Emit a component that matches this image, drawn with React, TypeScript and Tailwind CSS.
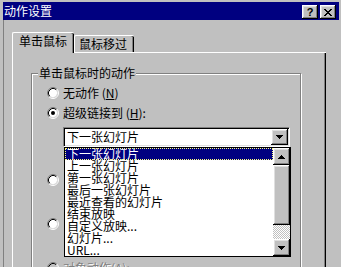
import type { ReactNode } from "react"

const raised =
  "bg-[#c0c0c0] shadow-[inset_-1px_-1px_0_#000,inset_1px_1px_0_#fff,inset_-2px_-2px_0_#808080,inset_2px_2px_0_#dfdfdf]"

const listItems = [
  "下一张幻灯片",
  "上一张幻灯片",
  "第一张幻灯片",
  "最后一张幻灯片",
  "最近查看的幻灯片",
  "结束放映",
  "自定义放映...",
  "幻灯片...",
  "URL...",
]

// rows of the little close "X", as [start, end] pixel spans
const closeRows = [
  [[0, 2], [6, 8]],
  [[1, 3], [5, 7]],
  [[2, 6]],
  [[3, 5]],
  [[2, 6]],
  [[1, 3], [5, 7]],
  [[0, 2], [6, 8]],
]

function CloseGlyph() {
  return (
    <svg width="8" height="7" viewBox="0 0 8 7" shapeRendering="crispEdges">
      {closeRows.map((spans, y) =>
        spans.map(([a, b]) => (
          <rect key={`${y}-${a}`} x={a} y={y} width={b - a} height={1} fill="#000" />
        ))
      )}
    </svg>
  )
}

function ArrowDown() {
  return (
    <svg width="7" height="4" viewBox="0 0 7 4" shapeRendering="crispEdges">
      <path d="M0 0H7V1H6V2H5V3H4V4H3V3H2V2H1V1H0Z" fill="#000" />
    </svg>
  )
}

function ArrowUp() {
  return (
    <svg width="7" height="4" viewBox="0 0 7 4" shapeRendering="crispEdges">
      <path d="M3 0H4V1H5V2H6V3H7V4H0V3H1V2H2V1H3Z" fill="#000" />
    </svg>
  )
}

function TitleButton({ children }: { children: ReactNode }) {
  return (
    <div className={`flex h-[14px] w-[16px] items-center justify-center ${raised}`}>
      {children}
    </div>
  )
}

function Radio({ checked, disabled }: { checked?: boolean; disabled?: boolean }) {
  return (
    <svg width="12" height="12" viewBox="0 0 12 12" className="shrink-0">
      <circle cx="6" cy="6" r="4.2" fill={disabled ? "#c0c0c0" : "#fff"} />
      <path d="M2.11 9.89A5.5 5.5 0 0 1 9.89 2.11" stroke="#808080" fill="none" />
      <path d="M9.89 2.11A5.5 5.5 0 0 1 2.11 9.89" stroke="#fff" fill="none" />
      <path d="M2.82 9.18A4.5 4.5 0 0 1 9.18 2.82" stroke="#000" fill="none" />
      <path d="M9.18 2.82A4.5 4.5 0 0 1 2.82 9.18" stroke="#dfdfdf" fill="none" />
      {checked && <circle cx="6" cy="6" r="2" fill="#000" />}
    </svg>
  )
}

function RadioRow({
  checked,
  disabled,
  className = "",
  children,
}: {
  checked?: boolean
  disabled?: boolean
  className?: string
  children?: ReactNode
}) {
  return (
    <div className={`flex h-[12px] items-center gap-[4px] ${className}`}>
      <Radio checked={checked} disabled={disabled} />
      {children && (
        <span
          className={
            disabled
              ? "whitespace-nowrap text-[#808080] [text-shadow:1px_1px_0_#fff]"
              : "whitespace-nowrap"
          }
        >
          {children}
        </span>
      )}
    </div>
  )
}

function DropdownList() {
  return (
    <div className="absolute left-0 top-[19px] z-20 flex w-[227px] border border-black bg-white">
      <div className="flex-1">
        {listItems.map((item, index) => (
          <div
            key={item}
            className={
              index === 0
                ? "h-[12px] whitespace-nowrap bg-[#000080] pl-[2px] leading-[12px] text-white outline-1 outline-offset-[-1px] outline-dotted outline-[#ffff80]"
                : "h-[12px] whitespace-nowrap pl-[2px] leading-[12px]"
            }
          >
            {item}
          </div>
        ))}
      </div>

      <div className="flex w-[17px] flex-col">
        <div className={`flex h-[17px] items-center justify-center ${raised}`}>
          <ArrowUp />
        </div>
        <div className={`h-[60px] ${raised}`} />
        <div className="h-[14px] bg-[repeating-conic-gradient(#fff_0_25%,#c0c0c0_0_50%)] bg-[length:2px_2px]" />
        <div className={`flex h-[17px] items-center justify-center ${raised}`}>
          <ArrowDown />
        </div>
      </div>
    </div>
  )
}

export default function App() {
  return (
    <div className="relative h-[267px] w-[341px] overflow-hidden bg-[#c0c0c0] pl-[3px] pr-[2px] pt-[2px] font-['Noto_Sans_CJK_SC',sans-serif] text-[12px] leading-[12px] text-black">
      <div className="flex h-[18px] items-center bg-[#000080] pl-[1px] pr-[3px]">
        <span className="flex-1 text-white">动作设置</span>
        <div className="mt-[2px] flex gap-[2px]">
          <TitleButton>
            <span className="font-['Liberation_Sans',sans-serif] text-[11px] font-bold leading-[11px]">?</span>
          </TitleButton>
          <TitleButton>
            <CloseGlyph />
          </TitleButton>
        </div>
      </div>

      <div className="h-[247px] border-l border-[#808080] pl-[8px] pt-[12px]">
        <div className="relative z-10 -mb-px flex items-end">
          <div className="h-[21px] w-[62px] rounded-tl-[2px] rounded-tr-[2px] border-l border-t border-white bg-[#c0c0c0] pl-[6px] pt-[2px] shadow-[inset_-1px_0_0_#000,inset_-2px_0_0_#808080]">
            单击鼠标
          </div>
          <div className="mb-px h-[17px] w-[60px] rounded-tl-[2px] rounded-tr-[2px] border-l border-t border-white bg-[#c0c0c0] pl-[4px] pt-[2px] shadow-[inset_-1px_0_0_#000,inset_-2px_0_0_#808080]">
            鼠标移过
          </div>
        </div>

        <div className="h-[220px] w-[314px] border-l border-t border-white pl-[18px] pt-[20px] shadow-[inset_-1px_0_0_#000,inset_-2px_0_0_#808080]">
          <div className="relative h-[220px] w-[270px] border border-[#808080] pl-[15px] pt-[13px] shadow-[inset_1px_1px_0_#fff,1px_1px_0_#fff]">
            <span className="absolute left-[6px] top-[-7px] whitespace-nowrap bg-[#c0c0c0] px-[1px]">
              单击鼠标时的动作
            </span>

            <RadioRow>
              无动作 (<u>N</u>)
            </RadioRow>
            <RadioRow checked className="mt-[8px]">
              超级链接到 (<u>H</u>):
            </RadioRow>

            <div className="relative ml-[16px] mt-[8px] h-[20px] w-[227px] border border-b-white border-l-[#808080] border-r-white border-t-[#808080] bg-white p-[1px] shadow-[inset_1px_1px_0_#000,inset_-1px_-1px_0_#dfdfdf]">
              <div className="flex h-full items-center">
                <span className="flex-1 whitespace-nowrap pl-[2px]">下一张幻灯片</span>
                <div className={`flex h-[16px] w-[17px] items-center justify-center ${raised}`}>
                  <ArrowDown />
                </div>
              </div>
              <DropdownList />
            </div>

            {/* the next two radios have their labels hidden under the open list */}
            <RadioRow className="mt-[27px]" />
            <div className="ml-[16px] mt-[5px] h-[21px] w-[160px]" />
            <RadioRow className="mt-[6px]" />
            <div className="ml-[16px] mt-[5px] h-[21px] w-[160px]" />
            <RadioRow disabled className="mt-[6px]">
              对象动作(<u>A</u>):
            </RadioRow>
          </div>
        </div>
      </div>
    </div>
  )
}
